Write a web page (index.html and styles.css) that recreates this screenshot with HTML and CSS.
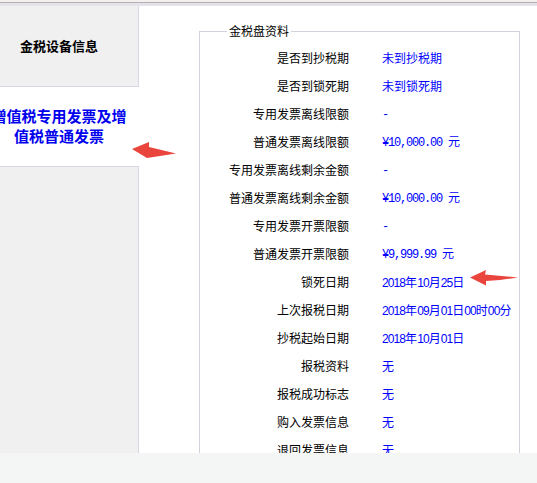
FILE: index.html
```html
<!DOCTYPE html>
<html lang="zh-CN">
<head>
<meta charset="utf-8">
<title>金税盘资料</title>
<link rel="stylesheet" href="styles.css">
</head>
<body>
<div class="topbar"></div>
<div class="layout">
  <nav class="sidebar">
    <div class="tab"><span class="tab-label">金税设备信息</span></div>
    <div class="tab tab-active"><div class="tab-label-wide">增值税专用发票及增值税普通发票</div></div>
    <div class="tab tab-rest"></div>
  </nav>
  <main class="panel">
    <fieldset class="info">
      <legend>金税盘资料</legend>
      <div class="rows">
        <div class="lbl">是否到抄税期</div><div class="val">未到抄税期</div>
        <div class="lbl">是否到锁死期</div><div class="val">未到锁死期</div>
        <div class="lbl">专用发票离线限额</div><div class="val"><span class="mono">-</span></div>
        <div class="lbl">普通发票离线限额</div><div class="val"><span class="mono">¥10,000.00 </span>元</div>
        <div class="lbl">专用发票离线剩余金额</div><div class="val"><span class="mono">-</span></div>
        <div class="lbl">普通发票离线剩余金额</div><div class="val"><span class="mono">¥10,000.00 </span>元</div>
        <div class="lbl">专用发票开票限额</div><div class="val"><span class="mono">-</span></div>
        <div class="lbl">普通发票开票限额</div><div class="val"><span class="mono">¥9,999.99 </span>元</div>
        <div class="lbl">锁死日期</div><div class="val"><span class="num">2018</span>年<span class="num">10</span>月<span class="num">25</span>日</div>
        <div class="lbl">上次报税日期</div><div class="val"><span class="num">2018</span>年<span class="num">09</span>月<span class="num">01</span>日<span class="num">00</span>时<span class="num">00</span>分</div>
        <div class="lbl">抄税起始日期</div><div class="val"><span class="num">2018</span>年<span class="num">10</span>月<span class="num">01</span>日</div>
        <div class="lbl">报税资料</div><div class="val">无</div>
        <div class="lbl">报税成功标志</div><div class="val">无</div>
        <div class="lbl">购入发票信息</div><div class="val">无</div>
        <div class="lbl">退回发票信息</div><div class="val">无</div>
      </div>
    </fieldset>
  </main>
</div>
<div class="footer"></div>

<svg class="arrow arrow-one" width="50" height="22" viewBox="129 140 50 22" aria-hidden="true">
  <polygon points="132,149 149,142 149,147 176,153.5 147,158" fill="#e9453d"/>
</svg>
<svg class="arrow arrow-two" width="54" height="20" viewBox="467 268 54 20" aria-hidden="true">
  <polygon points="470,277.5 486,270 485,274.5 518,277.5 500,280 486,281 486,285.5" fill="#e9453d"/>
</svg>
</body>
</html>
```

FILE: styles.css
```css
html, body {
  margin: 0;
  padding: 0;
}
body {
  width: 537px;
  height: 483px;
  overflow: hidden;
  background: #f0f0f0;
  font-family: "Noto Sans CJK SC", "Liberation Sans", sans-serif;
  font-size: 12px;
  color: #000;
  position: relative;
}
.topbar {
  margin-top: 2px;
  height: 3px;
  border-top: 1px solid #b9adad;
  background: #e4e3eb;
}
.layout {
  display: flex;
  height: 447px;
  overflow: hidden;
}
.sidebar {
  width: 139px;
  flex: none;
  display: flex;
  flex-direction: column;
}
.tab {
  box-sizing: border-box;
  border-right: 1px solid #d9d7e5;
  background: #f0f0f0;
}
.tab:first-child {
  height: 81px;
  border-bottom: 1px solid #d9d7e5;
  display: flex;
  align-items: center;
  padding-right: 20px;
  padding-bottom: 2px;
  justify-content: center;
}
.tab-label {
  font-size: 13px;
  font-weight: bold;
  color: #000;
}
.tab-active {
  height: 79px;
  background: #fff;
  border-right: none;
  display: flex;
  align-items: center;
}
.tab-label-wide {
  width: 136px;
  flex: none;
  margin-left: -9px;
  text-align: center;
  font-size: 15px;
  line-height: 20px;
  font-weight: bold;
  color: #0000ee;
  padding-bottom: 2px;
}
.tab-rest {
  flex: 1;
  border-top: 1px solid #d9d7e5;
}
.panel {
  flex: 1;
  background: #fff;
  padding-top: 18px;
}
.info {
  margin: 0 17px 0 60px;
  padding: 6px 0 0 0;
  border: 1px solid #d3d1dc;
  min-width: 0;
}
.info legend {
  margin-left: 27px;
  padding: 0 2px;
  font-size: 12px;
  line-height: 14px;
}
.rows {
  display: grid;
  grid-template-columns: 149px 1fr;
  grid-auto-rows: 28px;
  align-items: center;
}
.lbl {
  text-align: right;
  line-height: 28px;
  white-space: nowrap;
}
.val {
  padding-left: 33px;
  line-height: 28px;
  color: #0000ff;
  white-space: nowrap;
}
.mono {
  font-family: "Liberation Mono", monospace;
  font-size: 12px;
  letter-spacing: -1.2px;
}
.num {
  font-family: "Liberation Sans", sans-serif;
  font-size: 12px;
  letter-spacing: -0.9px;
}
.footer {
  height: 30px;
  background: #f4f6f5;
}
.arrow {
  position: absolute;
}
.arrow-one {
  left: 129px;
  top: 140px;
}
.arrow-two {
  left: 467px;
  top: 268px;
}
```
